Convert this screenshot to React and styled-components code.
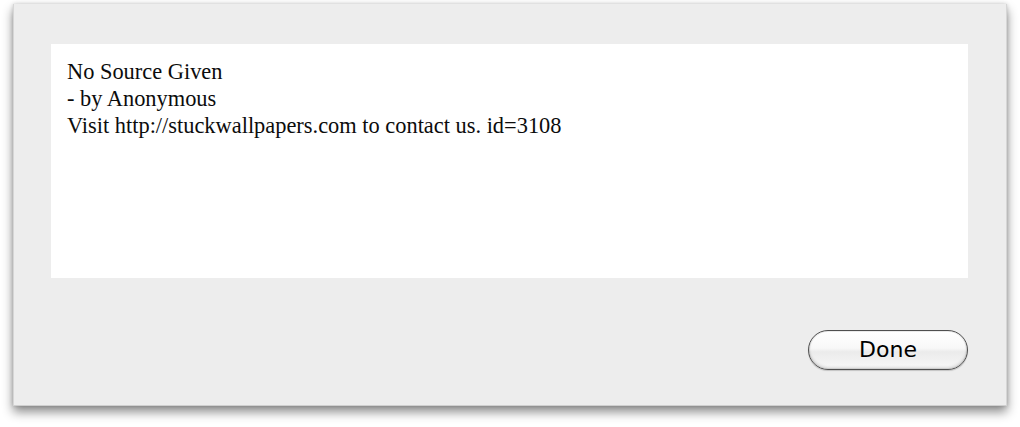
import React from "react";
import styled, { createGlobalStyle } from "styled-components";

const Global = createGlobalStyle`
  body {
    margin: 0;
    background: #ffffff;
  }
`;

const Page = styled.div`
  width: 1020px;
  height: 427px;
  padding: 4px 0 0 13px;
  box-sizing: border-box;
`;

const Sheet = styled.div`
  width: 994px;
  height: 402px;
  box-sizing: border-box;
  background: #ededed;
  border-left: 1px solid #d6d6d6;
  border-right: 1px solid #d6d6d6;
  border-bottom: 1px solid #cfcfcf;
  box-shadow: 0 6px 10px rgba(0, 0, 0, 0.45), 0 0 4px rgba(0, 0, 0, 0.18);
  padding: 40px 38px 0 37px;
  display: flex;
  flex-direction: column;
`;

const TextBox = styled.div`
  flex-shrink: 0;
  background: #ffffff;
  height: 234px;
  padding: 14px 16px;
  box-sizing: border-box;
  font-family: "Liberation Serif", "Times New Roman", serif;
  font-size: 22.4px;
  line-height: 27px;
  color: #0c0c0c;
`;

const Line = styled.div`
  white-space: pre;
`;

const Footer = styled.div`
  display: flex;
  justify-content: flex-end;
  margin-top: 52px;
`;

const Button = styled.button`
  width: 160px;
  height: 40px;
  border-radius: 20px;
  border: 1px solid #4e4e4e;
  background: linear-gradient(
    to bottom,
    #ffffff 0%,
    #f8f8f8 45%,
    #ebebeb 55%,
    #f3f3f3 85%,
    #ffffff 100%
  );
  box-shadow: inset 0 -2px 3px rgba(0, 0, 0, 0.14), inset 0 0 0 1px rgba(0, 0, 0, 0.08),
    0 1px 1px rgba(0, 0, 0, 0.18);
  font-family: "DejaVu Sans", "Lucida Grande", sans-serif;
  font-size: 22px;
  color: #000;
  padding: 0 0 2px;
  cursor: pointer;
`;

export default function App() {
  return (
    <Page>
      <Global />
      <Sheet>
        <TextBox>
          <Line>No Source Given</Line>
          <Line>- by Anonymous</Line>
          <Line>Visit http://stuckwallpapers.com to contact us. id=3108</Line>
        </TextBox>
        <Footer>
          <Button>Done</Button>
        </Footer>
      </Sheet>
    </Page>
  );
}
